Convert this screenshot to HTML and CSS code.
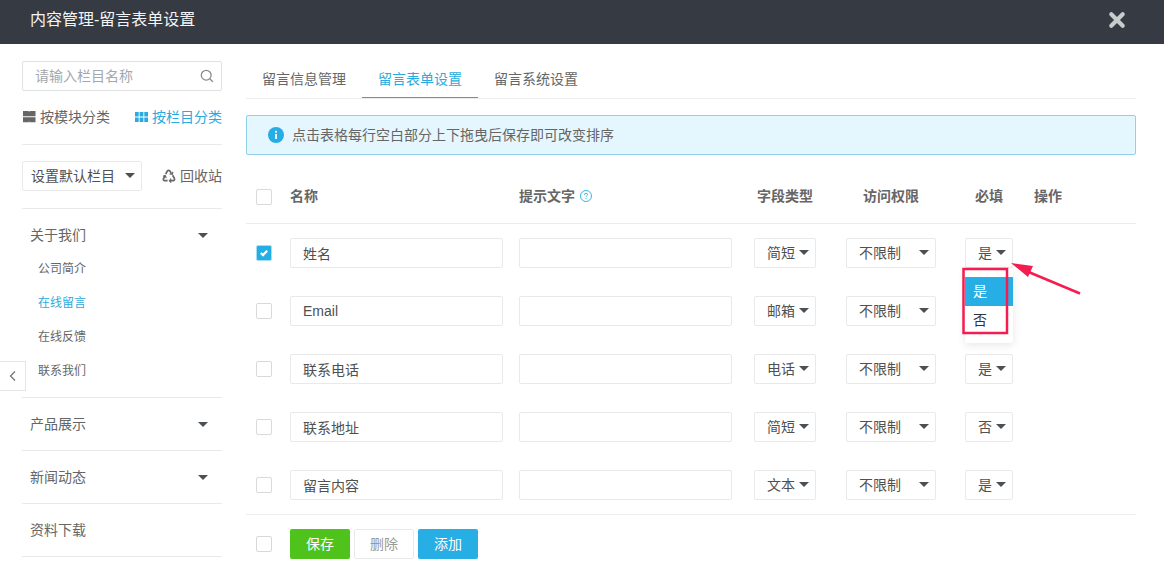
FILE: index.html
```html
<!DOCTYPE html>
<html lang="zh-CN">
<head>
<meta charset="utf-8">
<title>内容管理-留言表单设置</title>
<link rel="stylesheet" href="styles.css">
</head>
<body>
<header class="topbar">
  <h1 class="topbar-title">内容管理-留言表单设置</h1>
  <button class="close" type="button" aria-label="关闭">
    <svg width="18" height="18" viewBox="0 0 18 18"><path d="M3.300 3.300 14.700 14.700M14.700 3.300 3.300 14.700" fill="none" stroke="currentColor" stroke-width="4.200" stroke-linecap="round"/></svg>
  </button>
</header>
<div class="layout">
  <aside class="sidebar">
    <div class="search">
      <input class="search-input" type="text" placeholder="请输入栏目名称" aria-label="请输入栏目名称">
      <svg class="search-icon" width="14" height="14" viewBox="0 0 14 14" fill="none" stroke="currentColor" stroke-width="1.300"><circle cx="6.200" cy="6.200" r="4.900"/><path d="M9.800 9.800 12.800 12.800"/></svg>
    </div>
    <div class="modes">
      <a class="mode" href="#"><svg width="14" height="12" viewBox="0 0 14 12" fill="currentColor"><path d="M1 0h12.500v5.200H1zM1 6.200h12.500v5H1z"/><path d="M7.200 0v1M7.200 10.400v1" stroke="#fff" stroke-width=".6"/></svg>按模块分类</a>
      <a class="mode active" href="#"><svg width="13" height="12" viewBox="0 0 13 12" fill="currentColor"><path d="M0 1h3.700v4.500H0zM4.600 1h3.800v4.500H4.600zM9.300 1H13v4.500H9.300zM0 6.500h3.700V11H0zM4.600 6.500h3.800V11H4.600zM9.300 6.500H13V11H9.300z"/></svg>按栏目分类</a>
    </div>
    <div class="tools">
      <span class="picker picker-plain"><select aria-label="设置默认栏目"><option>设置默认栏目</option></select></span>
      <a class="recycle" href="#"><svg width="14" height="14" viewBox="0 0 14 14" fill="none" stroke="currentColor" stroke-width="1.700"><path d="M3.700 5 5.300 2.100Q6 1.200 7.100 1.500L8 2.100 9.400 4.600M10.600 6.300 12.400 9.400Q13 11.200 11.300 11.700H8M5.600 11.700H2.600Q.8 11.200 1.500 9.600L3 7"/><path d="M7.600 4.900 10.300 5.400 10.900 2.800M9.200 9.700 7.400 11.700 9.200 13.600M.9 7.300 3.200 6.600 4.200 9" stroke-width="1.200"/></svg>回收站</a>
    </div>
    <ul class="menu">
      <li class="menu-item"><a class="menu-title has-caret" href="#">关于我们</a>
        <ul class="submenu">
          <li><a href="#">公司简介</a></li>
          <li><a class="active" href="#">在线留言</a></li>
          <li><a href="#">在线反馈</a></li>
          <li><a href="#">联系我们</a></li>
        </ul>
      </li>
      <li class="menu-item"><a class="menu-title has-caret" href="#">产品展示</a></li>
      <li class="menu-item"><a class="menu-title has-caret" href="#">新闻动态</a></li>
      <li class="menu-item"><a class="menu-title" href="#">资料下载</a></li>
    </ul>
  </aside>
  <main class="main">
    <nav class="tabs">
      <a class="tab" href="#">留言信息管理</a>
      <a class="tab active" href="#">留言表单设置</a>
      <a class="tab" href="#">留言系统设置</a>
    </nav>
    <div class="notice">
      <svg width="16" height="16" viewBox="0 0 16 16"><circle cx="8" cy="8" r="8" fill="#25aee6"/><path d="M8 3.800v1.900M8 7v5" stroke="#fff" stroke-width="1.800"/></svg>
      <span>点击表格每行空白部分上下拖曳后保存即可改变排序</span>
    </div>
    <table class="fields">
      <colgroup><col class="col-check"><col class="col-text"><col class="col-text"><col class="col-type"><col class="col-access"><col class="col-required"><col></colgroup>
      <thead>
        <tr>
          <th class="cell-check"><label class="check"><input type="checkbox" aria-label="全选"></label></th>
          <th>名称</th>
          <th><span class="hint">提示文字<svg width="12" height="12" viewBox="0 0 12 12" fill="none" stroke="#3bb5e0" stroke-width="1"><circle cx="6" cy="6" r="5.500"/><path d="M4.400 4.900Q4.400 3.300 6 3.300T7.600 4.700Q7.600 5.400 6.800 5.900T6 7.200M6 8.200v1"/></svg></span></th>
          <th class="center">字段类型</th>
          <th class="center">访问权限</th>
          <th class="center">必填</th>
          <th>操作</th>
        </tr>
      </thead>
      <tbody>
        <tr>
          <td class="cell-check"><label class="check"><input type="checkbox" aria-label="选择姓名" checked><svg class="tick" width="8" height="8" viewBox="0 0 8 8"><path d="M.8 4 3 6.100 7.200 1.800" fill="none" stroke="#fff" stroke-width="2.200"/></svg></label></td>
          <td><input class="text" type="text" value="姓名" aria-label="名称"></td>
          <td><input class="text" type="text" aria-label="提示文字"></td>
          <td class="center"><span class="picker picker-type"><select aria-label="字段类型"><option>简短</option></select></span></td>
          <td class="center"><span class="picker picker-access"><select aria-label="访问权限"><option>不限制</option></select></span></td>
          <td class="center"><span class="picker picker-required"><select aria-label="必填"><option>是</option><option>否</option></select>
            <span class="dropdown" role="listbox" aria-label="必填选项"><span class="option selected" role="option" aria-selected="true">是</span><span class="option" role="option" aria-selected="false">否</span></span>
            <svg class="callout" width="120" height="76" viewBox="0 0 120 76" fill="none" stroke="#f51c50"><rect x="2.500" y="6" width="43.500" height="64" stroke-width="2.500"/><path d="M64 7.500 119 30.500" stroke-width="2.500"/><path d="M50 0 72 3 67 14Z" fill="#f51c50" stroke="none"/></svg>
          </span></td>
          <td></td>
        </tr>
        <tr>
          <td class="cell-check"><label class="check"><input type="checkbox" aria-label="选择Email"></label></td>
          <td><input class="text" type="text" value="Email" aria-label="名称"></td>
          <td><input class="text" type="text" aria-label="提示文字"></td>
          <td class="center"><span class="picker picker-type"><select aria-label="字段类型"><option>邮箱</option></select></span></td>
          <td class="center"><span class="picker picker-access"><select aria-label="访问权限"><option>不限制</option></select></span></td>
          <td class="center"><span class="picker picker-required"><select aria-label="必填"><option>是</option><option>否</option></select></span></td>
          <td></td>
        </tr>
        <tr>
          <td class="cell-check"><label class="check"><input type="checkbox" aria-label="选择联系电话"></label></td>
          <td><input class="text" type="text" value="联系电话" aria-label="名称"></td>
          <td><input class="text" type="text" aria-label="提示文字"></td>
          <td class="center"><span class="picker picker-type"><select aria-label="字段类型"><option>电话</option></select></span></td>
          <td class="center"><span class="picker picker-access"><select aria-label="访问权限"><option>不限制</option></select></span></td>
          <td class="center"><span class="picker picker-required"><select aria-label="必填"><option>是</option><option>否</option></select></span></td>
          <td></td>
        </tr>
        <tr>
          <td class="cell-check"><label class="check"><input type="checkbox" aria-label="选择联系地址"></label></td>
          <td><input class="text" type="text" value="联系地址" aria-label="名称"></td>
          <td><input class="text" type="text" aria-label="提示文字"></td>
          <td class="center"><span class="picker picker-type"><select aria-label="字段类型"><option>简短</option></select></span></td>
          <td class="center"><span class="picker picker-access"><select aria-label="访问权限"><option>不限制</option></select></span></td>
          <td class="center"><span class="picker picker-required"><select aria-label="必填"><option>是</option><option selected>否</option></select></span></td>
          <td></td>
        </tr>
        <tr>
          <td class="cell-check"><label class="check"><input type="checkbox" aria-label="选择留言内容"></label></td>
          <td><input class="text" type="text" value="留言内容" aria-label="名称"></td>
          <td><input class="text" type="text" aria-label="提示文字"></td>
          <td class="center"><span class="picker picker-type"><select aria-label="字段类型"><option>文本</option></select></span></td>
          <td class="center"><span class="picker picker-access"><select aria-label="访问权限"><option>不限制</option></select></span></td>
          <td class="center"><span class="picker picker-required"><select aria-label="必填"><option>是</option><option>否</option></select></span></td>
          <td></td>
        </tr>
      </tbody>
      <tfoot>
        <tr>
          <td class="cell-check"><label class="check"><input type="checkbox" aria-label="全选"></label></td>
          <td colspan="6"><div class="actions"><button class="btn btn-save" type="button">保存</button><button class="btn btn-delete" type="button">删除</button><button class="btn btn-add" type="button">添加</button></div></td>
        </tr>
      </tfoot>
    </table>
  </main>
</div>
<button class="collapse" type="button" aria-label="收起侧栏"><svg width="8" height="12" viewBox="0 0 8 12"><path d="M6 1.500 1.500 6 6 10.500" fill="none" stroke="currentColor" stroke-width="1.300"/></svg></button>
</body>
</html>
```
FILE: styles.css
```css
* { box-sizing: border-box; }
body {
  margin: 0;
  background: #fff;
  color: #666;
  font-family: "Liberation Sans", "Noto Sans CJK SC", sans-serif;
  font-size: 14px;
  line-height: 20px;
}
a { color: inherit; text-decoration: none; }
ul { list-style: none; margin: 0; padding: 0; }
svg { display: block; flex: none; }
button, input, select { font: inherit; color: inherit; }
button { cursor: pointer; }

.topbar {
  display: flex;
  align-items: center;
  justify-content: space-between;
  height: 44px;
  padding: 0 38px 4px 30px;
  background: #363a43;
  color: #f3f4f5;
}
.topbar-title { margin: 0; font-size: 16px; font-weight: 400; }
.close { border: 0; padding: 0; background: none; color: #c8cccf; }

.layout { display: flex; gap: 24px; padding: 17px 28px 0 22px; }
.sidebar { flex: none; width: 200px; }
.main { flex: 1; min-width: 0; }

.search { position: relative; }
.search-input {
  display: block;
  width: 100%;
  height: 30px;
  padding: 0 32px 0 12px;
  border: 1px solid #dfe1e3;
  border-radius: 2px;
  background: #fff;
}
.search-input::placeholder { color: #a3a8ae; opacity: 1; }
.search-icon { position: absolute; top: 8px; right: 8px; color: #8a8a8a; }
.modes {
  display: flex;
  justify-content: space-between;
  padding: 16px 0 17px;
  border-bottom: 1px solid #e9e9e9;
}
.mode, .recycle { display: flex; align-items: center; gap: 4px; }
.active { color: #2aabe0; }
.tools {
  display: flex;
  align-items: center;
  justify-content: space-between;
  padding: 16px 0 17px;
  border-bottom: 1px solid #e9e9e9;
}
.menu-item { padding: 9px 0; border-bottom: 1px solid #e9e9e9; }
.menu-title {
  display: flex;
  align-items: center;
  justify-content: space-between;
  padding: 0 14px 0 8px;
  line-height: 34px;
}
.has-caret::after, .picker::after {
  content: "";
  border: 5px solid transparent;
  border-top-color: #4b5054;
  border-bottom-width: 0;
}
.submenu { padding-left: 16px; font-size: 12px; line-height: 34px; }

.tabs { display: flex; border-bottom: 1px solid #ececec; }
.tab { padding: 8px 16px; border-bottom: 1px solid transparent; }
.tab.active { border-bottom-color: #2aabe0; }
.notice {
  display: flex;
  align-items: center;
  gap: 8px;
  height: 40px;
  margin: 16px 0 15px;
  padding: 0 21px;
  border: 1px solid #91d0ea;
  border-radius: 2px;
  background: #e5f7fe;
}

.fields { width: 100%; table-layout: fixed; border-collapse: separate; border-spacing: 0; }
.col-check { width: 36px; }
.col-text { width: 229px; }
.col-type { width: 90px; }
.col-access { width: 122px; }
.col-required { width: 74px; }
th, td { height: 58px; padding: 0 8px; text-align: left; vertical-align: middle; }
th { height: 54px; padding-bottom: 2px; border-bottom: 1px solid #ececec; font-weight: 700; }
th.cell-check { padding-bottom: 0; }
tfoot td { height: 45px; padding-top: 14px; border-top: 1px solid #ececec; }
.cell-check { padding-left: 10px; }
.center { text-align: center; }
.hint { display: flex; align-items: center; gap: 5px; }
.check { position: relative; display: block; width: 16px; height: 16px; }
.check input {
  display: block;
  appearance: none;
  width: 16px;
  height: 16px;
  margin: 0;
  border: 1px solid #d9d9d9;
  border-radius: 2px;
  background: #fff;
}
.check input:checked { border-color: #a8dcf3; background: #25aee6; }
.tick { position: absolute; top: 4px; left: 4px; }
.text {
  display: block;
  width: 100%;
  height: 30px;
  padding: 0 12px;
  border: 1px solid #e9e9e9;
  border-radius: 2px;
  background: #fff;
  color: #505050;
}
.picker { position: relative; display: inline-block; vertical-align: middle; color: #505050; text-align: left; }
.picker select {
  display: block;
  appearance: none;
  width: 100%;
  height: 30px;
  padding: 0 0 0 12px;
  border: 1px solid #e9e9e9;
  border-radius: 2px;
  background: #fff;
}
.picker::after { position: absolute; top: 12px; right: 7px; pointer-events: none; }
.picker-plain { width: 120px; }
.picker-plain select { padding-left: 8px; }
.picker-type { width: 62px; }
.picker-access { width: 90px; }
.picker-required { width: 48px; }
.dropdown {
  position: absolute;
  z-index: 1;
  top: 31px;
  left: 0;
  width: 100%;
  padding: 8px 0;
  border-radius: 2px;
  background: #fff;
  box-shadow: 0 2px 8px rgba(0, 0, 0, .1);
}
.option { display: block; padding: 0 8px; line-height: 29px; color: #333; }
.option.selected { background: #27aee5; color: #fff; }
.callout { position: absolute; z-index: 2; top: 25px; left: -4px; }

.actions { display: flex; gap: 4px; }
.btn { width: 60px; height: 30px; padding: 0; border: 1px solid transparent; border-radius: 2px; color: #fff; }
.btn-save { background: #4fc31b; }
.btn-delete { border-color: #e9e9e9; background: #fff; color: #999; }
.btn-add { background: #27aee5; }

.collapse {
  position: absolute;
  top: 361px;
  left: 0;
  display: flex;
  align-items: center;
  justify-content: center;
  width: 26px;
  height: 30px;
  padding: 0;
  border: 1px solid #e6e6e6;
  border-left: 0;
  background: #fff;
  color: #777;
}
```
